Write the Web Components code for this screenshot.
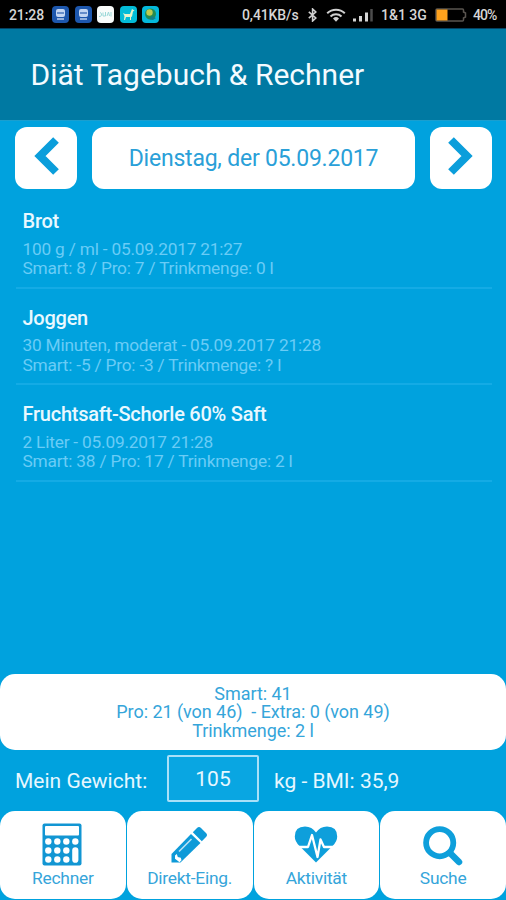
<!DOCTYPE html>
<html lang="de">
<head>
<meta charset="utf-8">
<title>Diät Tagebuch &amp; Rechner</title>
<style>
  html, body {
    margin: 0;
    height: 100%;
    background: #00a2de;
    font-family: Roboto, "Liberation Sans", sans-serif;
  }
</style>
</head>
<body>
<diary-app></diary-app>

<script>
'use strict';

function attachTemplate(host, html) {
  let template = document.createElement('template');
  template.innerHTML = html;
  host.attachShadow({mode: 'open'}).appendChild(template.content.cloneNode(true));
}

class StatusBar extends HTMLElement {
  constructor() {
    super();
    attachTemplate(this, `<style>
        :host {
          display: flex;
          align-items: center;
          height: 28px;
          box-sizing: border-box;
          padding: 1px 8px 0 9px;
          background: #000;
          color: #d6d6d6;
          font-size: 14px;
          font-weight: 500;
          line-height: 28px;
          white-space: nowrap;
        }
        svg { display: block; flex: none; }
        .apps { display: flex; gap: 5.5px; margin-left: 8px; flex: 1; }
        .time { width: 35px; letter-spacing: -0.1px; }
        .speed { width: 57px; letter-spacing: -0.1px; }
        .net { width: 46px; letter-spacing: 0; }
        .percent { width: 25px; font-size: 14px; letter-spacing: -0.9px; }
      </style>
      <span class="time">21:28</span>
      <span class="apps">
        <svg width="17" height="17" viewBox="0 0 17 17"><rect width="17" height="17" rx="4" fill="#1d57ad"/><rect x="4" y="3" width="9" height="8" rx="2" fill="#c3d6f3"/><path d="M5 7h7" stroke="#4775bd" stroke-width="1.5"/><path d="M5 13h7" stroke="#b1c8eb" stroke-width="1.6"/></svg>
        <svg width="17" height="17" viewBox="0 0 17 17"><rect width="17" height="17" rx="4" fill="#1d57ad"/><rect x="4" y="3" width="9" height="8" rx="2" fill="#c3d6f3"/><path d="M5 7h7" stroke="#4775bd" stroke-width="1.5"/><path d="M5 13h7" stroke="#b1c8eb" stroke-width="1.6"/></svg>
        <svg width="17" height="17" viewBox="0 0 17 17"><rect width="17" height="17" rx="4" fill="#f8fbfa"/><path d="M2 10.500q2 .5 2.500-1.500T3 6.500M6 6.500v3.500h2.500V6M10 10l1.500-4 1 4M14 6v4.500" fill="none" stroke="#9bd8d8" stroke-width="1"/></svg>
        <svg width="17" height="17" viewBox="0 0 17 17"><rect width="17" height="17" rx="4" fill="#03bcd8"/><path d="M3 7l2 1h5l2-5 2.500 1.500-1.500 1-1 5-1 .5v3h-1v-3H6l-1 3H4l.5-4z" fill="#e9f3cc"/></svg>
        <svg width="17" height="17" viewBox="0 0 17 17"><rect width="17" height="17" rx="4" fill="#04b9dc"/><circle cx="8.500" cy="8" r="5.500" fill="#258b52"/><circle cx="7.500" cy="6.500" r="3.200" fill="#bdcb50"/><path d="M10 10l4 2-3 2-4-1z" fill="#147f86"/></svg>
      </span>
      <span class="speed">0,41KB/s</span>
      <svg style="margin-left:8px" width="11" height="14" viewBox="0 0 11 14"><path d="M1.800 3.800l7 6.200-3.200 3V1l3.200 3-7 6.200" fill="none" stroke="#cfcfcf" stroke-width="1.600"/></svg>
      <svg style="margin-left:8px" width="20" height="14" viewBox="0 0 20 14"><path d="M1.200 5.300a12.600 12.600 0 0 1 17.600 0M4.500 8.500a8 8 0 0 1 11 0" fill="none" stroke="#d0d0d0" stroke-width="2"/><path d="M7 10.400a4.500 4.500 0 0 1 6 0l-3 3.300z" fill="#d0d0d0"/></svg>
      <svg style="margin-left:6px" width="21" height="14" viewBox="0 0 21 14"><path d="M2.500 10.500v3M8.500 8v5.500M14.500 4.500v9" stroke="#d5d5d5" stroke-width="3"/><path d="M19.500 1v12.500" stroke="#4d4d4d" stroke-width="2.500"/></svg>
      <span class="net" style="margin-left:8px">1&amp;1 3G</span>
      <svg style="margin-left:8px" width="32" height="14" viewBox="0 0 32 14"><path d="M2 1h25.500q1 0 1 1v2l2 1v4l-2 1v2q0 1-1 1H2q-1 0-1-1V2q0-1 1-1z" fill="none" stroke="#5a5550" stroke-width="1.500"/><rect x="1.500" y="1.500" width="11" height="11" fill="#ffa21d"/></svg>
      <span class="percent" style="margin-left:6px">40%</span>`);
  }
}
customElements.define('status-bar', StatusBar);

class AppHeader extends HTMLElement {
  constructor() {
    super();
    attachTemplate(this, `<style>
        :host {
          display: block;
          height: 93px;
          box-sizing: border-box;
          padding-left: 30.5px;
          background: #0079a2;
          border-top: 1px solid #044263;
          border-bottom: 1px solid #1a9fcf;
          color: #f3fbff;
          font-size: 30px;
          line-height: 91px;
        }
      </style><slot></slot>`);
  }
}
customElements.define('app-header', AppHeader);

class DateSwitcher extends HTMLElement {
  constructor() {
    super();
    attachTemplate(this, `<style>
        :host {
          display: grid;
          grid-template-columns: 62px 1fr 62px;
          column-gap: 15px;
          height: 62px;
          padding: 6px 14px 0 15px;
        }
        .cell {
          display: flex;
          align-items: center;
          justify-content: center;
          background: #fff;
          border-radius: 12px;
          color: #2aa0d8;
          font-size: 23px;
          letter-spacing: -0.22px;
          white-space: nowrap;
        }
        svg { display: block; margin-top: -4px; }
        path { fill: none; stroke: #0b9edb; stroke-width: 8; }
      </style>
      <div class="cell"><svg width="26" height="38" viewBox="0 0 26 38"><path d="M23 3L7 19l16 16"/></svg></div>
      <div class="cell"><slot></slot></div>
      <div class="cell"><svg width="26" height="38" viewBox="0 0 26 38"><path d="M3 3l16 16L3 35"/></svg></div>`);
  }
}
customElements.define('date-switcher', DateSwitcher);

class DiaryEntry extends HTMLElement {
  constructor() {
    super();
    attachTemplate(this, `<style>
        :host {
          display: block;
          height: 96.5px;
          box-sizing: border-box;
          margin: 0 14px 0 16px;
          padding: 17px 0 0 6.5px;
          border-bottom: 2px solid #14abe5;
          color: #6accf6;
          font-size: 17.3px;
          letter-spacing: -0.2px;
          line-height: 19.8px;
          white-space: nowrap;
        }
        .name {
          color: #e9f8ff;
          font-size: 20px;
          font-weight: 500;
          letter-spacing: -0.25px;
          line-height: 24px;
          margin-bottom: 6.5px;
        }
      </style>
      <div class="name"><slot name="name"></slot></div>
      <div><slot name="amount"></slot></div>
      <div><slot name="points"></slot></div>`);
  }
}
customElements.define('diary-entry', DiaryEntry);

class DaySummary extends HTMLElement {
  constructor() {
    super();
    attachTemplate(this, `<style>
        :host {
          display: flex;
          flex-direction: column;
          justify-content: center;
          height: 76px;
          box-sizing: border-box;
          padding-top: 1px;
          background: #fff;
          border-radius: 15px;
          color: #35a5da;
          font-size: 18px;
          letter-spacing: -0.05px;
          line-height: 18.3px;
          text-align: center;
          white-space: pre;
        }
      </style><slot></slot>`);
  }
}
customElements.define('day-summary', DaySummary);

class WeightRow extends HTMLElement {
  constructor() {
    super();
    attachTemplate(this, `<style>
        :host {
          display: flex;
          align-items: center;
          height: 61px;
          box-sizing: border-box;
          padding: 5px 0 9px 15px;
          color: #e6f7ff;
          font-size: 21px;
          white-space: nowrap;
        }
        .label { width: 152px; padding-top: 5px; }
        .value {
          width: 92px;
          height: 47px;
          box-sizing: border-box;
          border: 2px solid #a9e0f8;
          border-radius: 2px;
          background: #09a6e2;
          line-height: 45px;
          text-align: center;
        }
        .unit { margin-left: 15px; padding-top: 5px; }
      </style>
      <span class="label"><slot name="label"></slot></span>
      <span class="value"><slot name="value"></slot></span>
      <span class="unit"><slot name="unit"></slot></span>`);
  }
}
customElements.define('weight-row', WeightRow);

class TabButton extends HTMLElement {
  constructor() {
    super();
    attachTemplate(this, `<style>
        :host {
          display: flex;
          flex-direction: column;
          align-items: center;
          height: 87.5px;
          box-sizing: border-box;
          padding-top: 10px;
          background: #fff;
          border-radius: 15px;
          color: #35a5da;
          font-size: 17.4px;
          letter-spacing: -0.25px;
          line-height: 22px;
          white-space: nowrap;
        }
        ::slotted(svg) { display: block; height: 46px; width: 46px; }
      </style>
      <slot name="icon"></slot>
      <slot></slot>`);
  }
}
customElements.define('tab-button', TabButton);

class DiaryApp extends HTMLElement {
  constructor() {
    super();
    attachTemplate(this, `<style>
        :host {
          display: flex;
          flex-direction: column;
          width: 506px;
          height: 900px;
          overflow: hidden;
          background: #00a2de;
        }
        .entries { flex: 1; padding-top: 3px; }
        .tabs {
          display: grid;
          grid-template-columns: repeat(4, 1fr);
          column-gap: 1px;
          padding-bottom: 1.5px;
        }
      </style>
      <status-bar></status-bar>
      <app-header>Diät Tagebuch &amp; Rechner</app-header>
      <date-switcher>Dienstag, der 05.09.2017</date-switcher>
      <div class="entries">
        <diary-entry>
          <span slot="name">Brot</span>
          <span slot="amount">100 g / ml - 05.09.2017 21:27</span>
          <span slot="points">Smart: 8 / Pro: 7 / Trinkmenge: 0 l</span>
        </diary-entry>
        <diary-entry>
          <span slot="name">Joggen</span>
          <span slot="amount">30 Minuten, moderat - 05.09.2017 21:28</span>
          <span slot="points">Smart: -5 / Pro: -3 / Trinkmenge: ? l</span>
        </diary-entry>
        <diary-entry>
          <span slot="name">Fruchtsaft-Schorle 60% Saft</span>
          <span slot="amount">2 Liter - 05.09.2017 21:28</span>
          <span slot="points">Smart: 38 / Pro: 17 / Trinkmenge: 2 l</span>
        </diary-entry>
      </div>
      <day-summary><div>Smart: 41</div><div>Pro: 21 (von 46)  - Extra: 0 (von 49)</div><div>Trinkmenge: 2 l</div></day-summary>
      <weight-row>
        <span slot="label">Mein Gewicht:</span>
        <span slot="value">105</span>
        <span slot="unit">kg - BMI: 35,9</span>
      </weight-row>
      <div class="tabs">
        <tab-button>
          <svg slot="icon" viewBox="0 0 46 46">
            <rect x="2.500" y="2.500" width="39" height="42" rx="2" fill="#1296d3"/>
            <g fill="#fff">
              <rect x="5" y="5" width="34" height="9.500" rx="1"/>
              <circle cx="8.300" cy="20.500" r="3.200"/><circle cx="17.300" cy="20.500" r="3.200"/><circle cx="26.300" cy="20.500" r="3.200"/><circle cx="35.300" cy="20.500" r="3.200"/>
              <circle cx="8.300" cy="29.500" r="3.200"/><circle cx="17.300" cy="29.500" r="3.200"/><circle cx="26.300" cy="29.500" r="3.200"/>
              <circle cx="8.300" cy="38.500" r="3.200"/><circle cx="17.300" cy="38.500" r="3.200"/><circle cx="26.300" cy="38.500" r="3.200"/>
              <rect x="32.200" y="26.300" width="6.200" height="15.500" rx="3.100"/>
            </g>
          </svg>
          Rechner
        </tab-button>
        <tab-button>
          <svg slot="icon" viewBox="0 0 46 46">
            <path d="M4.500 33L24 13l9.500 9-20 19.500h-9z" fill="#0e9ad8"/>
            <path d="M25.800 11.200L30 7q2-2 4 0l5 5q2 2 0 4l-4.200 4.200z" fill="#0e9ad8"/>
            <path d="M12 30.500L24.500 18" stroke="#b9e2f4" stroke-width="1.600"/>
            <path d="M8 34.500l1.800-1.500 1 3 3 .7.700 2.500-2 2-1.200-1-3.300-2.500z" fill="#fff"/>
          </svg>
          Direkt-Eing.
        </tab-button>
        <tab-button>
          <svg slot="icon" viewBox="0 0 46 46">
            <path d="M23 41.500L6.500 25Q1.800 20.500 1.800 15.500 1.800 5.500 12 5.500q7 0 11 6 4-6 11-6 10.200 0 10.200 10 0 5-4.700 9.500z" fill="#0e9fdb"/>
            <path d="M4 26h11l4-12 5.500 22 3-17.500 3.500 7.500h11" fill="none" stroke="#fff" stroke-width="2.300" stroke-linejoin="round"/>
          </svg>
          Aktivität
        </tab-button>
        <tab-button>
          <svg slot="icon" viewBox="0 0 46 46">
            <circle cx="19.700" cy="21.700" r="13.600" fill="none" stroke="#0e9fdb" stroke-width="5.800"/>
            <path d="M30 32l9 9" stroke="#0e9fdb" stroke-width="6.500" stroke-linecap="round"/>
          </svg>
          Suche
        </tab-button>
      </div>`);
  }
}
customElements.define('diary-app', DiaryApp);
</script>
</body>
</html>
